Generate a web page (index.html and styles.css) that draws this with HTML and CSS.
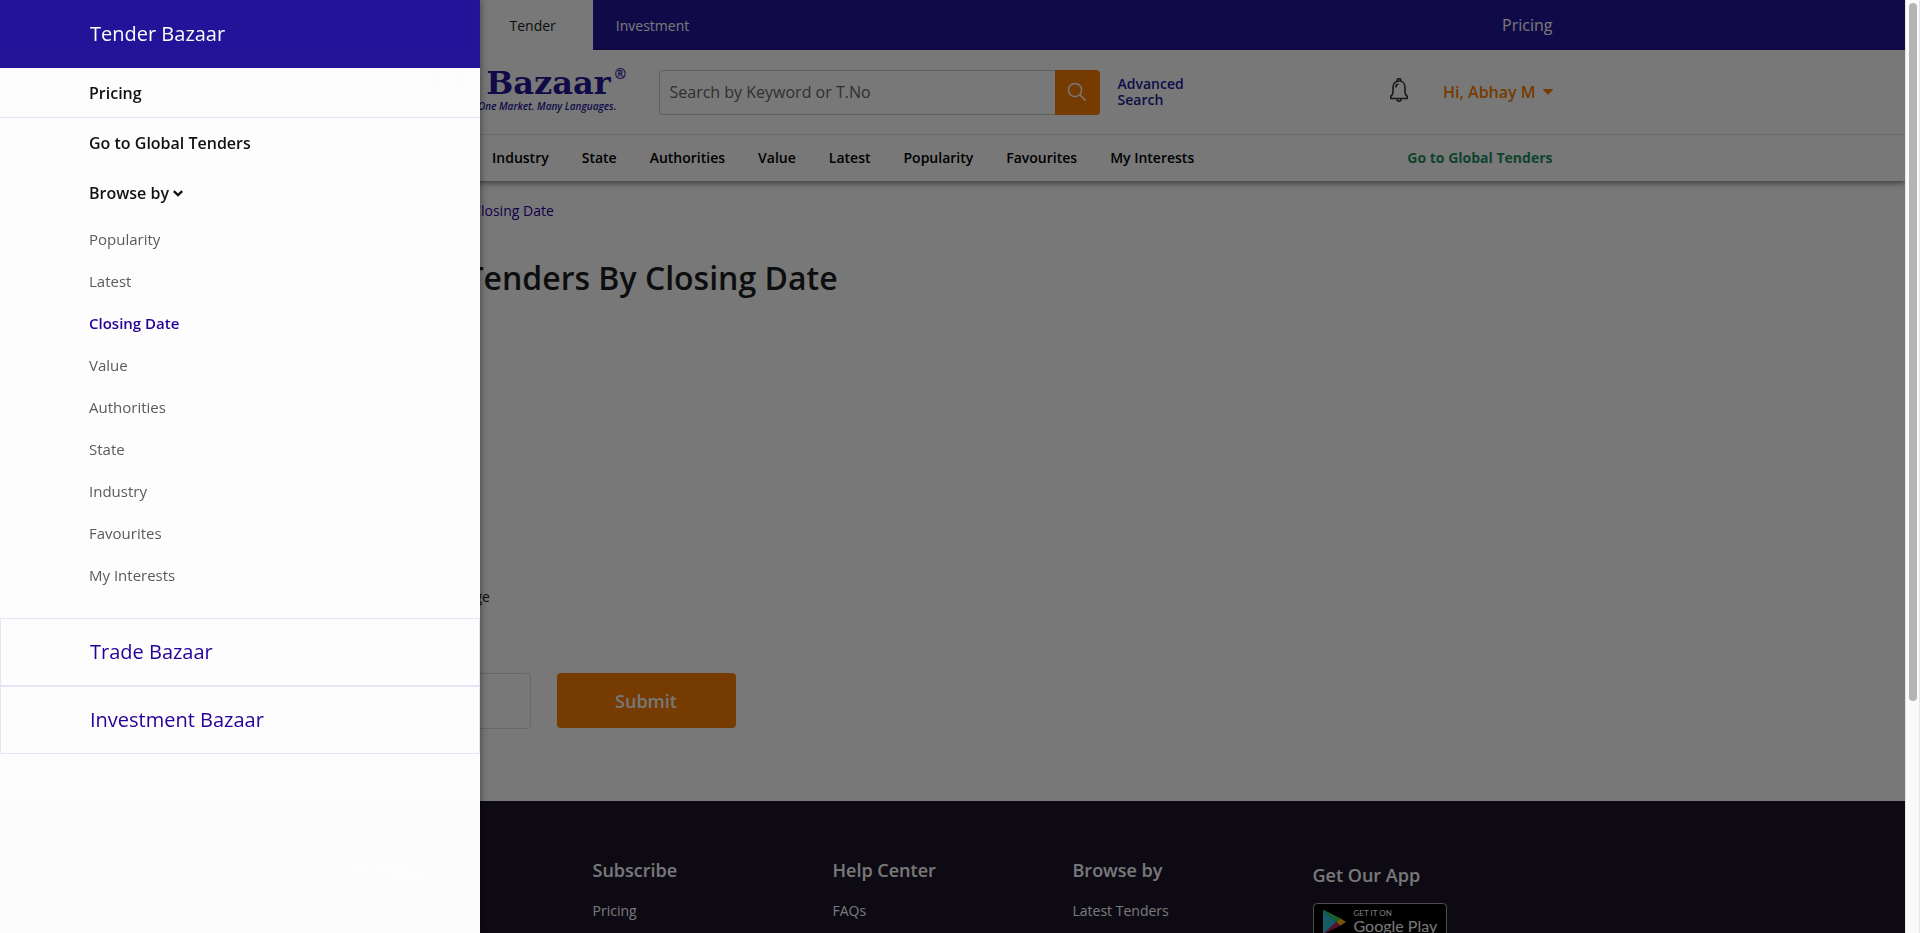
FILE: index.html
```html
<!DOCTYPE html>
<html lang="en">
<head>
<meta charset="utf-8">
<meta name="viewport" content="width=device-width, initial-scale=1">
<title>Search Tenders By Closing Date</title>
<link rel="stylesheet" href="styles.css">
</head>
<body>
<div class="shell">
  <div class="page">
    <div class="topbar">
      <div class="container topbar-row">
        <nav class="tabs" aria-label="Bazaars">
          <a class="tab tab-active" href="#">Tender</a>
          <a class="tab" href="#">Investment</a>
        </nav>
        <a class="topbar-link" href="#">Pricing</a>
      </div>
    </div>
    <header class="header">
      <div class="container brand-row">
        <button class="burger" type="button" aria-label="Menu"><span></span><span></span><span></span></button>
        <a class="logo" href="#">
          <span class="logo-name">Ek Bazaar<span class="logo-mark">®</span></span>
          <span class="logo-tag">One Nation. One Market. Many Languages.</span>
        </a>
        <form class="search">
          <input class="search-input" type="text" aria-label="Search by Keyword or T.No" placeholder="Search by Keyword or T.No">
          <button class="search-button" type="button" aria-label="Search">
            <svg width="20" height="20" viewBox="0 0 20 20" fill="none" stroke="#fff" stroke-width="1.5"><circle cx="8" cy="8" r="6.6"/><path d="M12.8 12.8L18.6 18.6"/></svg>
          </button>
        </form>
        <a class="advanced" href="#">Advanced Search</a>
        <div class="account">
          <button class="bell" type="button" aria-label="Notifications">
            <svg width="18" height="24" viewBox="0 0 18 24" fill="none" stroke="#333" stroke-width="1.6" stroke-linejoin="round"><path d="M7.2 3.1V2.4a1.7 1.7 0 0 1 3.6 0v.7"/><path d="M9 3C5.400 3 3 5.700 3 9.200V14c0 2.200-.6 3.200-2.200 4.200V20.500H17.200V18.200C15.600 17.200 15 16.200 15 14V9.200C15 5.700 12.600 3 9 3z"/><path d="M7 20.700v.6a2 2 0 0 0 4 0v-.6M5.700 9.600c0-1.900 1-3.200 2.700-3.600"/></svg>
          </button>
          <button class="user" type="button">Hi, Abhay M
            <svg width="10" height="6" viewBox="0 0 10 6"><path d="M0.400 0H9.600Q10.300.3 9.700 1L5.600 5.300Q5 5.900 4.400 5.300L.3 1Q-.3.3.4 0z" fill="#fa7d00"/></svg>
          </button>
        </div>
      </div>
      <div class="subnav">
        <nav class="container subnav-row" aria-label="Browse">
          <span class="subnav-label">Browse by:</span>
          <div class="subnav-links">
            <a href="#">All</a>
            <a href="#">Industry</a>
            <a href="#">State</a>
            <a href="#">Authorities</a>
            <a href="#">Value</a>
            <a href="#">Latest</a>
            <a href="#">Popularity</a>
            <a href="#">Favourites</a>
            <a href="#">My Interests</a>
          </div>
          <a class="global" href="#">Go to Global Tenders</a>
        </nav>
      </div>
    </header>
    <main class="container main">
      <nav class="crumbs" aria-label="Breadcrumb"><a href="#">Home</a> / <a href="#">Search By Closing Date</a></nav>
      <h1 class="title">Search Tenders By Closing Date</h1>
      <form>
        <div class="options">
          <label class="option"><input type="radio" name="date">Today</label>
          <label class="option"><input type="radio" name="date">Tomorrow</label>
          <label class="option"><input type="radio" name="date">Next 7 Days</label>
          <label class="option"><input type="radio" name="date">Next 15 Days</label>
          <label class="option"><input type="radio" name="date">This Month</label>
          <label class="option"><input type="radio" name="date">Next Month</label>
          <label class="option"><input type="radio" name="date">Enter Date Range</label>
        </div>
        <div class="submit-row">
          <input class="range" type="text" aria-label="Date range">
          <button class="submit" type="button">Submit</button>
        </div>
      </form>
    </main>
    <footer class="footer">
      <div class="container footer-grid">
        <div class="footer-col"><h2>Ek Bazaar</h2></div>
        <div class="footer-col"><h2>Subscribe</h2><a href="#">Pricing</a></div>
        <div class="footer-col"><h2>Help Center</h2><a href="#">FAQs</a></div>
        <div class="footer-col"><h2>Browse by</h2><a href="#">Latest Tenders</a></div>
        <div class="footer-col footer-app">
          <h2>Get Our App</h2>
          <a class="play" href="#">
            <svg width="24" height="26" viewBox="0 0 24 26"><path d="M0 .5V25.500L13.500 13z" fill="#2ec4dc"/><path d="M0 0.500L17.300 9.300L13.300 13z" fill="#3cd35a"/><path d="M17.300 9.300L23 13L17.300 16.700L13.300 13z" fill="#fbb211"/><path d="M0 25.500L17.300 16.700L13.300 13z" fill="#c51c62"/></svg>
            <span class="play-text"><span class="play-small">GET IT ON</span><span class="play-big">Google Play</span></span>
          </a>
        </div>
      </div>
    </footer>
    <div class="overlay"></div>
  </div>
  <div class="scrollbar" aria-hidden="true"><div class="thumb"></div></div>
</div>
<aside class="drawer">
  <a class="drawer-title" href="#">Tender Bazaar</a>
  <a class="drawer-link drawer-divided" href="#">Pricing</a>
  <a class="drawer-link" href="#">Go to Global Tenders</a>
  <button class="drawer-link" type="button">Browse by
    <svg width="10" height="7" viewBox="0 0 10 7" fill="none" stroke="#111" stroke-width="2.400"><path d="M.8 1.200L5 5.200L9.200 1.200"/></svg>
  </button>
  <nav class="drawer-list" aria-label="Browse by">
    <a href="#">Popularity</a>
    <a href="#">Latest</a>
    <a class="current" href="#">Closing Date</a>
    <a href="#">Value</a>
    <a href="#">Authorities</a>
    <a href="#">State</a>
    <a href="#">Industry</a>
    <a href="#">Favourites</a>
    <a href="#">My Interests</a>
  </nav>
  <a class="drawer-box" href="#">Trade Bazaar</a>
  <a class="drawer-box" href="#">Investment Bazaar</a>
</aside>
</body>
</html>
```
FILE: styles.css
```css
* { box-sizing: border-box; }
body {
  margin: 0;
  overflow: hidden;
  background: #fff;
  color: #1b1c20;
  font: 14px/20px "Open Sans", "Noto Sans", sans-serif;
}
a { color: inherit; text-decoration: none; }
button, input { font: inherit; color: inherit; margin: 0; }
button { border: 0; padding: 0; background: none; cursor: pointer; }
svg { display: block; flex: none; }

.shell { display: flex; height: 100vh; }
.page { position: relative; flex: 1; min-width: 0; overflow: hidden; }
.container { max-width: 1200px; margin: 0 auto; }

.topbar { background: #26179b; color: #fff; }
.topbar-row { display: flex; justify-content: space-between; align-items: center; height: 50px; }
.tabs { display: flex; align-self: stretch; margin-left: 120px; }
.tab { display: flex; align-items: center; padding: 2px 23px 0; }
.tab-active { padding: 2px 37px 0; background: #fff; color: #1b1c20; }
.topbar-link { font-size: 16px; }

.header { box-shadow: 0 2px 6px rgba(0, 0, 0, .5); }
.brand-row { display: flex; align-items: center; height: 84px; }
.burger { display: flex; flex-direction: column; justify-content: center; align-items: center; gap: 6px; width: 48px; height: 48px; margin-right: 20px; }
.burger span { width: 24px; height: 2px; background: #26179b; }
.logo { display: flex; flex-direction: column; width: 211px; margin-right: 27px; padding-bottom: 4px; color: #26179b; white-space: nowrap; }
.logo-name { display: flex; padding-left: 8px; font: bold 32px/32px "DejaVu Serif", serif; }
.logo-mark { margin-left: 4px; font: bold 14px/14px "Open Sans", sans-serif; }
.logo-tag { font-size: 10px; line-height: 14px; font-weight: 600; font-style: italic; }
.search { display: flex; width: 441px; height: 45px; }
.search-input { flex: 1; min-width: 0; padding: 0 10px; border: 1px solid #ccc; border-right: 0; border-radius: 4px 0 0 4px; background: #fff; font-size: 16px; }
.search-input::placeholder { color: #666; opacity: 1; }
.search-button { display: flex; justify-content: center; align-items: center; width: 45px; border-radius: 0 4px 4px 0; background: #fa7d00; }
.advanced { width: 80px; margin-left: 18px; color: #26179b; font-weight: 600; line-height: 16px; }
.account { display: flex; align-items: center; gap: 35px; margin-left: auto; }
.bell { padding-bottom: 4px; }
.user { display: flex; align-items: center; gap: 7px; color: #fa7d00; font-size: 16px; font-weight: 600; }

.subnav { border-top: 1px solid #e3e3e3; }
.subnav-row { display: flex; align-items: center; height: 46px; color: #000; font-weight: 600; }
.subnav-label { margin-right: 18px; font-weight: 400; }
.subnav-links { display: flex; gap: 33px; }
.global { margin-left: auto; color: #218f62; font-weight: 700; }

.main { padding: 20px 0 72px; }
.crumbs { color: #26009b; }
.title { margin: 35px 0 37px; font-size: 32px; line-height: 44px; font-weight: 600; }
.options { display: flex; flex-direction: column; }
.option { display: flex; align-items: center; gap: 8px; height: 40px; }
.option input { width: 16px; height: 16px; }
.submit-row { display: flex; gap: 26px; margin-top: 56px; }
.range { width: 178px; height: 56px; border: 1px solid #ddd; border-radius: 4px; background: #fff; }
.submit { width: 179px; height: 55px; border-radius: 4px; background: #fa7d00; color: #fff; font-size: 18px; font-weight: 600; }

.footer { min-height: 240px; padding-top: 55px; background: #1c172a; color: #fff; }
.footer-grid { display: grid; grid-template-columns: repeat(5, 240px); }
.footer-col h2 { margin: 0 0 17px; font-size: 18px; line-height: 28px; font-weight: 600; }
.footer-app { padding-top: 5px; }
.footer-app h2 { margin-bottom: 14px; }
.play { display: flex; align-items: center; gap: 7px; width: 134px; height: 40px; padding: 0 0 2px 9px; border: 1px solid #a6a6a6; border-radius: 4px; background: #000; }
.play-text { display: flex; flex-direction: column; }
.play-small { font: 8px/8px Lato, sans-serif; }
.play-big { font: 16px/18px Lato, sans-serif; }

.overlay { position: absolute; inset: 0; background: rgba(0, 0, 0, .53); }

.scrollbar { width: 15px; padding: 3px 2px 0 3px; border: solid #e5e5e5; border-width: 0 1px; background: #fafafa; }
.thumb { width: 8px; height: 75%; border-radius: 4px; background: #b4b4b4; }

.drawer {
  position: fixed;
  inset: 0 auto 0 0;
  width: 480px;
  background: #fff;
  opacity: .99;
  box-shadow: 0 0 8px rgba(0, 0, 0, .5);
}
.drawer > a, .drawer > button { display: flex; align-items: center; width: 100%; padding-left: 89px; }
.drawer > .drawer-title { height: 68px; border: 1px solid #231599; background: #231599; color: #fff; font-size: 20px; }
.drawer > .drawer-link { gap: 4px; height: 50px; color: #111; font-size: 16px; font-weight: 600; }
.drawer > .drawer-divided { border-bottom: 1px solid #e8e6fb; }
.drawer-list { display: flex; flex-direction: column; padding: 0 0 22px 89px; color: #5c5c60; font-size: 15px; }
.drawer-list a { display: flex; align-items: center; height: 42px; }
.drawer-list .current { color: #26009b; font-weight: 600; }
.drawer > .drawer-box { height: 68px; border: 1px solid #e8e6fb; color: #26009b; font-size: 20px; }
```
